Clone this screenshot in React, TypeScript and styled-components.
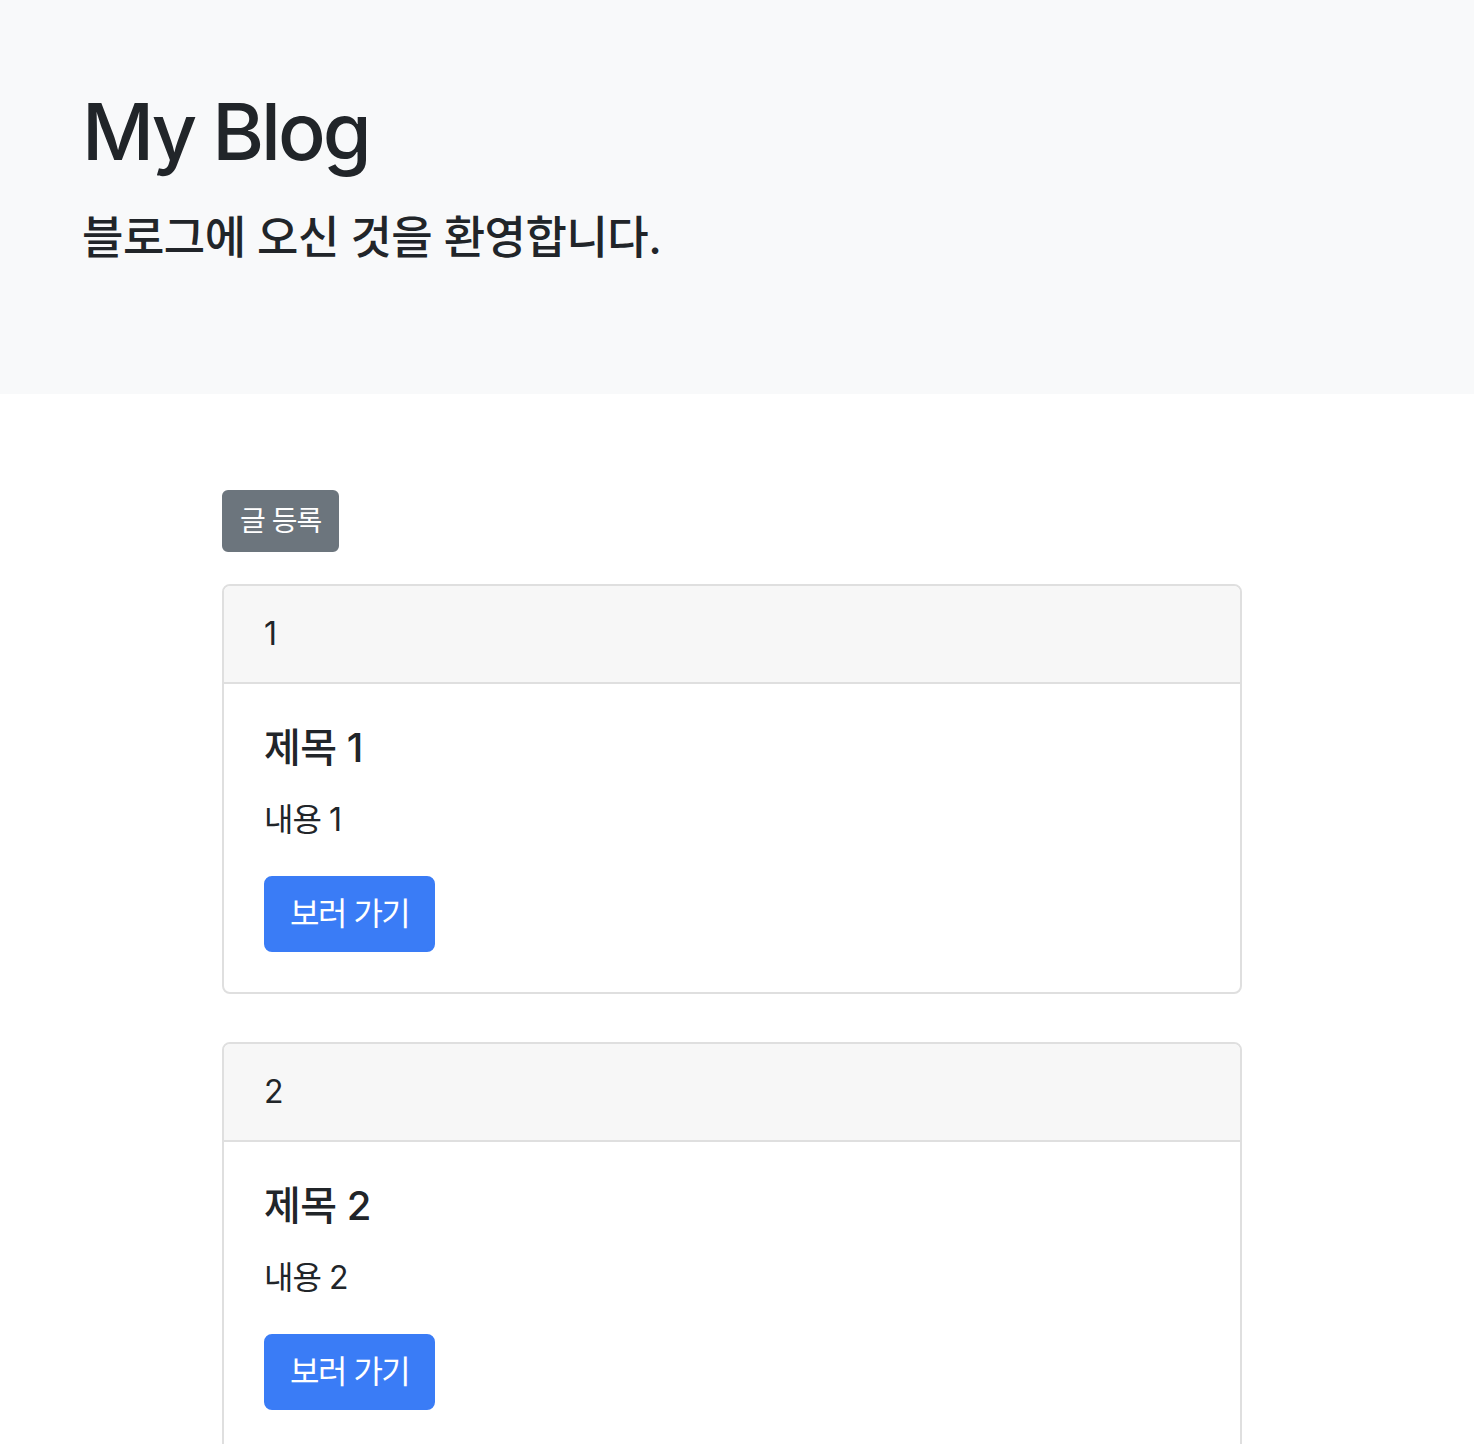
import styled, { createGlobalStyle } from "styled-components";

const GlobalStyle = createGlobalStyle`
  * { box-sizing: border-box; }
  body {
    margin: 0;
    background: #fff;
    color: #212529;
    font-family: Inter, "Noto Sans CJK KR", sans-serif;
  }
`;

const Jumbotron = styled.header`
  background-color: #f8f9fa;
  padding: 84px 82px 93px;
`;

const Title = styled.h1`
  margin: 0 0 27px;
  font-size: 79px;
  font-weight: 500;
  line-height: 1.2;
  letter-spacing: -3px;
`;

const Lead = styled.p`
  margin: 0 0 32px;
  font-size: 45px;
  font-weight: 500;
  line-height: 1.4;
  letter-spacing: -0.5px;
`;

const Container = styled.main`
  width: 1020px;
  margin-left: 222px;
  padding-top: 96px;
`;

const Button = styled.button<{ $variant?: "primary" | "secondary"; $small?: boolean }>`
  display: inline-block;
  border: 2px solid ${(p) => (p.$variant === "secondary" ? "#6c757d" : "#3a7cf6")};
  background-color: ${(p) => (p.$variant === "secondary" ? "#6c757d" : "#3a7cf6")};
  color: #fff;
  font-family: inherit;
  font-size: ${(p) => (p.$small ? "28px" : "32px")};
  line-height: 1.5;
  letter-spacing: ${(p) => (p.$small ? "-1px" : "-1.5px")};
  padding: ${(p) => (p.$small ? "8px 16px" : "12px 24px")};
  border-radius: ${(p) => (p.$small ? "6px" : "8px")};
  cursor: pointer;
`;

const Toolbar = styled.div`
  margin-bottom: 32px;
`;

const Card = styled.article`
  border: 2px solid #dfdfdf;
  border-radius: 8px;
  margin-bottom: 48px;
  overflow: hidden;
`;

const CardHeader = styled.div`
  background-color: #f7f7f7;
  border-bottom: 2px solid #dfdfdf;
  padding: 24px 40px;
  font-size: 32px;
  line-height: 1.5;
`;

const CardBody = styled.div`
  padding: 40px;
`;

const CardTitle = styled.h5`
  margin: 0 0 24px;
  font-size: 40px;
  font-weight: 500;
  line-height: 1.2;
  letter-spacing: -0.5px;
`;

const CardText = styled.p`
  margin: 0 0 32px;
  font-size: 32px;
  line-height: 1.5;
  letter-spacing: -1px;
`;

const posts = [
  { id: 1, title: "제목 1", content: "내용 1" },
  { id: 2, title: "제목 2", content: "내용 2" },
];

export default function App() {
  return (
    <>
      <GlobalStyle />
      <Jumbotron>
        <Title>My Blog</Title>
        <Lead>블로그에 오신 것을 환영합니다.</Lead>
      </Jumbotron>
      <Container>
        <Toolbar>
          <Button $variant="secondary" $small>
            글 등록
          </Button>
        </Toolbar>
        {posts.map((post) => (
          <Card key={post.id}>
            <CardHeader>{post.id}</CardHeader>
            <CardBody>
              <CardTitle>{post.title}</CardTitle>
              <CardText>{post.content}</CardText>
              <Button $variant="primary">보러 가기</Button>
            </CardBody>
          </Card>
        ))}
      </Container>
    </>
  );
}
